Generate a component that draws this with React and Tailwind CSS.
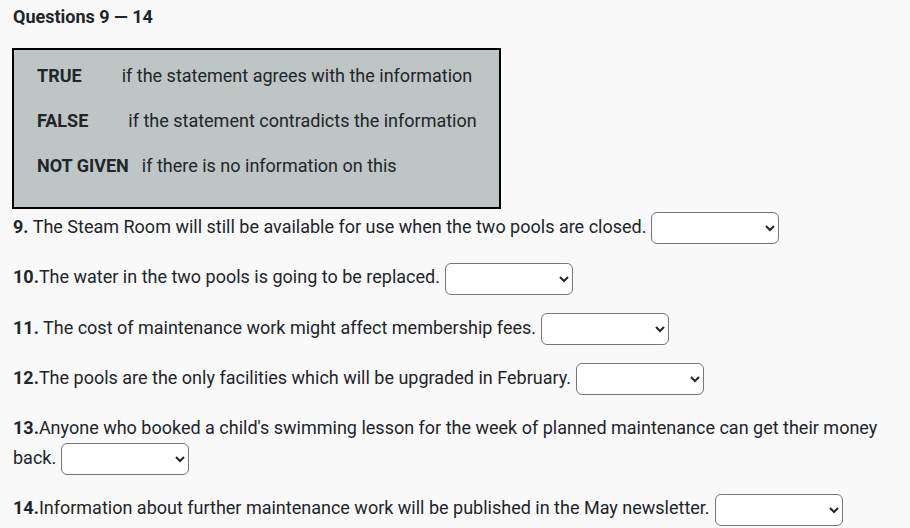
import React from 'react';

const legend = [
    { label: 'TRUE', text: 'if the statement agrees with the information', gap: 'ml-[40px]' },
    { label: 'FALSE', text: 'if the statement contradicts the information', gap: 'ml-[40px]' },
    { label: 'NOT GIVEN', text: 'if there is no information on this', gap: 'ml-[13px]' },
];

const questions = [
    { num: '9.', text: ' The Steam Room will still be available for use when the two pools are closed.' },
    { num: '10.', text: 'The water in the two pools is going to be replaced.' },
    { num: '11.', text: ' The cost of maintenance work might affect membership fees.' },
    { num: '12.', text: 'The pools are the only facilities which will be upgraded in February.' },
    { num: '13.', text: "Anyone who booked a child's swimming lesson for the week of planned maintenance can get their money back." },
    { num: '14.', text: 'Information about further maintenance work will be published in the May newsletter.' },
];

function AnswerSelect() {
    return (
        <select
            defaultValue=""
            className="ml-[5px] h-[32px] w-[128px] rounded-[6px] border border-[#767676] bg-white align-middle text-[15px]"
        >
            <option value=""></option>
            <option value="TRUE">TRUE</option>
            <option value="FALSE">FALSE</option>
            <option value="NOT GIVEN">NOT GIVEN</option>
        </select>
    );
}

export default function App() {
    return (
        <div className="min-h-[528px] bg-[#f9f9f9] px-[13px] text-[#212529] font-['Roboto',sans-serif]">
            <h2 className="pt-[5px] text-[18px] font-bold leading-[24px]">Questions 9 — 14</h2>

            <div className="mt-[19px] w-[489px] h-[161px] border-2 border-black bg-[#bec5c5] pl-[23px] pt-[3px] text-[18px] -ml-[1px]">
                {legend.map((row) => (
                    <div key={row.label} className="flex h-[45px] items-center leading-[22px]">
                        <span className="font-bold">{row.label}</span>
                        <span className={row.gap}>{row.text}</span>
                    </div>
                ))}
            </div>

            <div className="text-[18px]">
                {questions.map((q) => (
                    <p key={q.num} className="mt-[3px] mb-[18px] leading-[30px]">
                        <b>{q.num}</b>
                        {q.text}
                        <AnswerSelect />
                    </p>
                ))}
            </div>
        </div>
    );
}
